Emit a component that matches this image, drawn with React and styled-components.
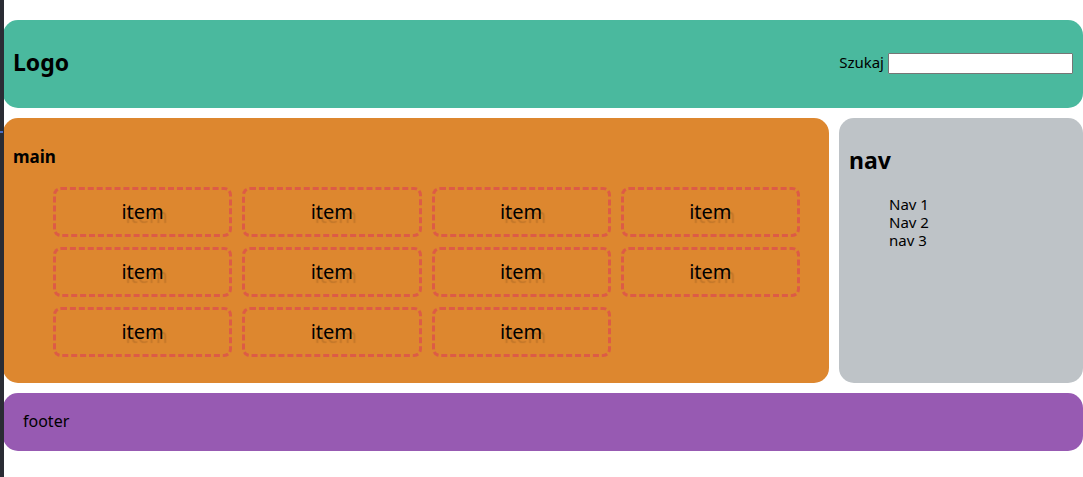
import React from 'react';
import styled, { createGlobalStyle } from 'styled-components';

const GlobalStyle = createGlobalStyle`
  *, *::before, *::after { box-sizing: border-box; }
  body {
    margin: 0;
    background: #fff;
    color: #000;
    font: 15px/18px "Noto Sans", sans-serif;
  }
`;

const Page = styled.div`
  display: grid;
  grid-template-columns: minmax(0, 1fr) 244px;
  gap: 10px;
  padding: 20px 0 20px 3px;
`;

const WindowEdge = styled.div`
  position: fixed;
  inset: 0 auto 0 0;
  width: 4px;
  background: #2a2c34;

  &::after {
    content: "";
    position: absolute;
    top: 131px;
    left: 0;
    width: 3px;
    height: 2px;
    background: #4a6fc4;
  }
`;

const Panel = styled.div`
  padding: 10px;
  border-radius: 15px;
  background: ${({ $color }) => $color};
`;

const Header = styled(Panel)`
  grid-column: 1 / -1;
  display: flex;
  justify-content: space-between;
  align-items: center;
`;

const Footer = styled(Panel)`
  grid-column: 1 / -1;
  padding: 19px 20px 21px;
  font-size: 16px;
`;

const Title = styled.h2`
  margin: 18px 0 22px;
  font-size: 23px;
  line-height: 28px;
`;

const Subtitle = styled.h3`
  margin: 18px 0 20px;
  font-size: 17px;
  line-height: 21px;
`;

const Search = styled.div`
  display: flex;
  align-items: center;
  gap: 4px;
  padding-bottom: 2px;
`;

const SearchLabel = styled.label`
  padding-bottom: 2px;
`;

const SearchInput = styled.input`
  width: 185px;
  height: 21px;
  padding: 1px 2px;
  border: 1px solid #767676;
  border-radius: 1px;
  background: #fff;
`;

const Items = styled.ul`
  display: grid;
  grid-template-columns: repeat(4, minmax(0, 1fr));
  gap: 10px;
  margin: 0 0 16px;
  padding: 0 19px 0 40px;
  list-style: none;
`;

const Item = styled.li`
  height: 50px;
  border: 3px dashed #dd5b46;
  border-radius: 8px;
  font-size: 20px;
  line-height: 44px;
  text-align: center;
  text-shadow: 4px 4px 1px rgba(0, 0, 0, 0.12);
`;

const NavList = styled.ul`
  margin: -1px 0 0;
  padding: 0 0 0 40px;
  list-style: none;
`;

const items = Array.from({ length: 11 }, (_, index) => index);
const links = ['Nav 1', 'Nav 2', 'nav 3'];

export default function App() {
  return (
    <>
      <GlobalStyle />
      <Page>
        <Header as="header" $color="#4ab99e">
          <Title>Logo</Title>
          <Search>
            <SearchLabel htmlFor="search">Szukaj</SearchLabel>
            <SearchInput id="search" type="text" />
          </Search>
        </Header>
        <Panel as="main" $color="#dd872f">
          <Subtitle>main</Subtitle>
          <Items>
            {items.map((item) => (
              <Item key={item}>item</Item>
            ))}
          </Items>
        </Panel>
        <Panel as="nav" $color="#bec3c7">
          <Title>nav</Title>
          <NavList>
            {links.map((link) => (
              <li key={link}>{link}</li>
            ))}
          </NavList>
        </Panel>
        <Footer as="footer" $color="#975ab2">footer</Footer>
      </Page>
      <WindowEdge />
    </>
  );
}
